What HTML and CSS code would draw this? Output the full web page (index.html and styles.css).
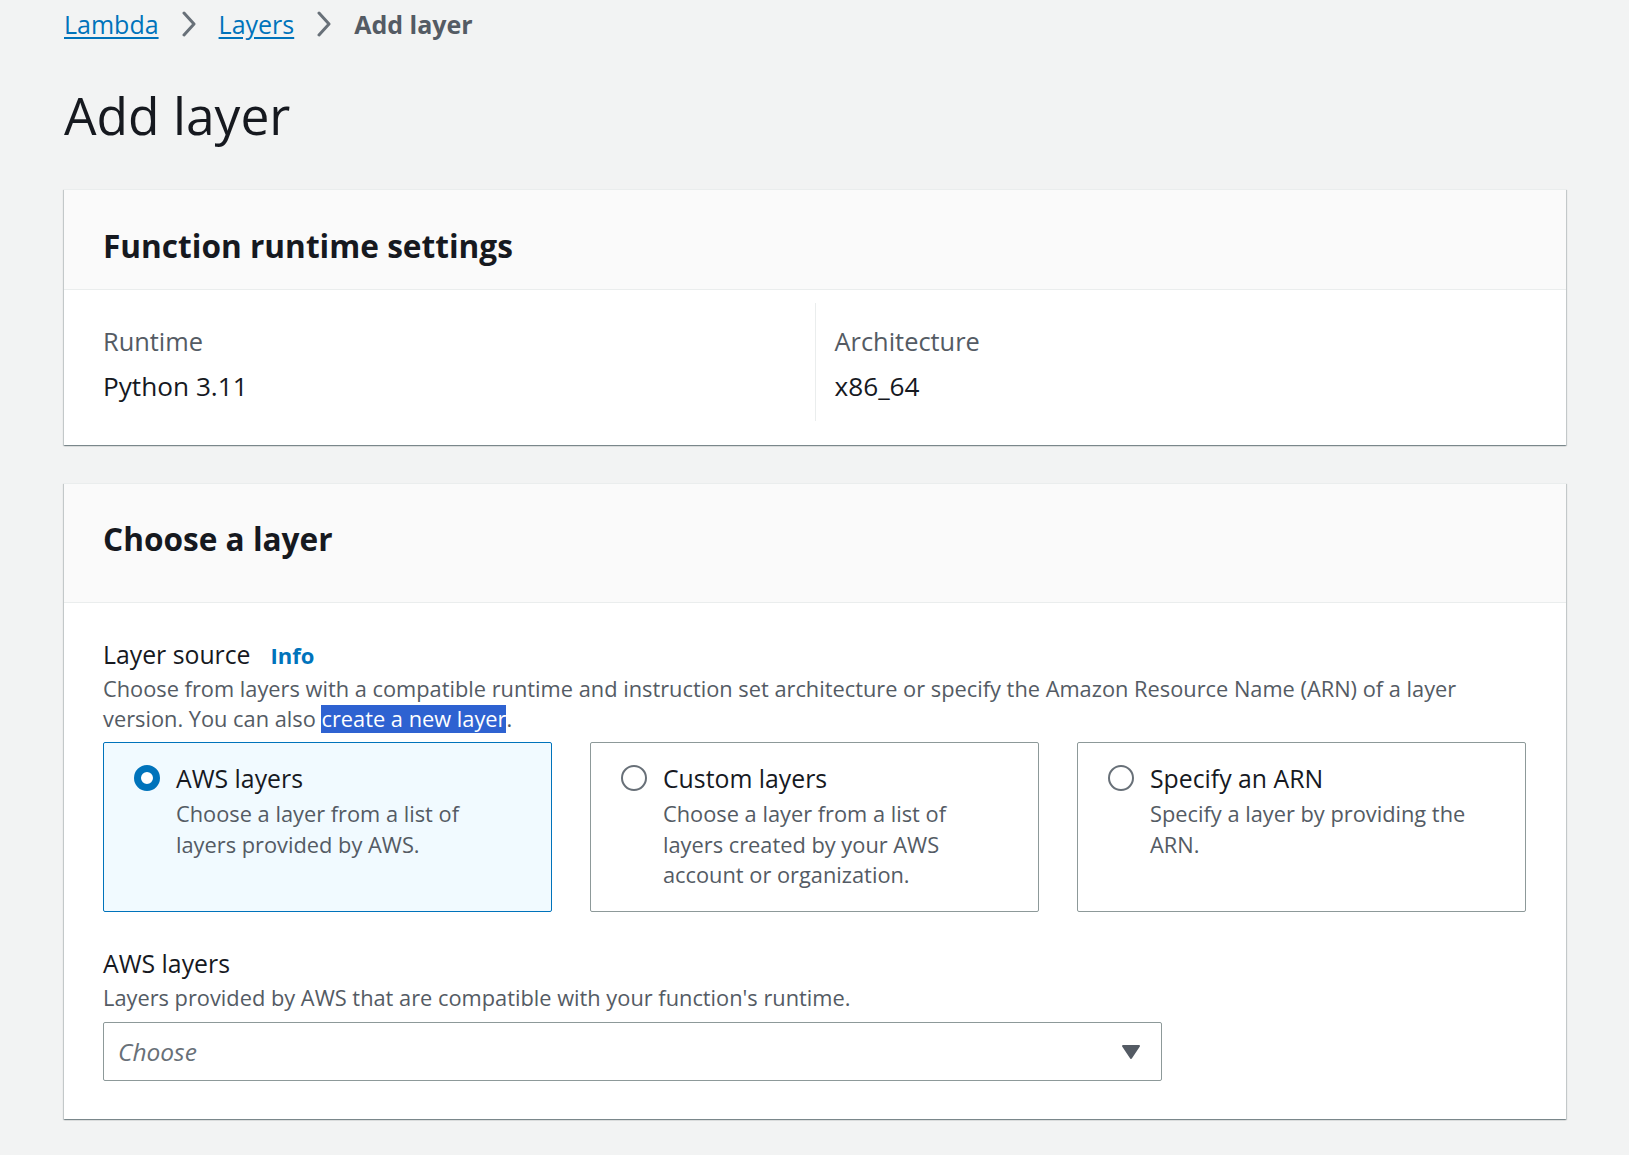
FILE: index.html
```
<!DOCTYPE html>
<html lang="en">
<head>
<meta charset="utf-8">
<title>Add layer</title>
<link rel="stylesheet" href="styles.css">
</head>
<body>
<div class="page">
  <nav class="breadcrumbs">
    <a class="crumb-link" href="#">Lambda</a>
    <svg class="crumb-sep" viewBox="0 0 16 26" width="16" height="26"><path d="M3 2 L13 13 L3 24" fill="none" stroke="#687078" stroke-width="3" stroke-linecap="round" stroke-linejoin="round"/></svg>
    <a class="crumb-link" href="#">Layers</a>
    <svg class="crumb-sep" viewBox="0 0 16 26" width="16" height="26"><path d="M3 2 L13 13 L3 24" fill="none" stroke="#687078" stroke-width="3" stroke-linecap="round" stroke-linejoin="round"/></svg>
    <span class="crumb-current">Add layer</span>
  </nav>

  <h1 class="page-title">Add layer</h1>

  <section class="container">
    <div class="container-header header-1">
      <h2 class="container-title">Function runtime settings</h2>
    </div>
    <div class="container-body kv-body">
      <div class="kv-col">
        <div class="kv-label">Runtime</div>
        <div class="kv-value">Python 3.11</div>
      </div>
      <div class="kv-col kv-col-divided">
        <div class="kv-label">Architecture</div>
        <div class="kv-value">x86_64</div>
      </div>
    </div>
  </section>

  <section class="container container-2">
    <div class="container-header header-2">
      <h2 class="container-title">Choose a layer</h2>
    </div>
    <div class="container-body form-body">
      <div class="field">
        <div class="field-label-row">
          <span class="field-label">Layer source</span>
          <a class="info-link" href="#">Info</a>
        </div>
        <div class="field-desc">Choose from layers with a compatible runtime and instruction set architecture or specify the Amazon Resource Name (ARN) of a layer version. You can also <span class="selected-text">create a new layer</span>.</div>
        <div class="tiles">
          <div class="tile tile-selected">
            <div class="tile-head">
              <span class="radio radio-on"></span>
              <span class="tile-title">AWS layers</span>
            </div>
            <div class="tile-desc">Choose a layer from a list of layers provided by AWS.</div>
          </div>
          <div class="tile">
            <div class="tile-head">
              <span class="radio"></span>
              <span class="tile-title">Custom layers</span>
            </div>
            <div class="tile-desc">Choose a layer from a list of layers created by your AWS account or organization.</div>
          </div>
          <div class="tile">
            <div class="tile-head">
              <span class="radio"></span>
              <span class="tile-title">Specify an ARN</span>
            </div>
            <div class="tile-desc">Specify a layer by providing the ARN.</div>
          </div>
        </div>
      </div>

      <div class="field field-2">
        <div class="field-label-row">
          <span class="field-label">AWS layers</span>
        </div>
        <div class="field-desc desc-2">Layers provided by AWS that are compatible with your function's runtime.</div>
        <div class="select">
          <span class="select-placeholder">Choose</span>
          <svg class="select-caret" viewBox="0 0 20 16" width="20" height="16"><path d="M2 2 L18 2 L10 14 Z" fill="#545b64" stroke="#545b64" stroke-width="2" stroke-linejoin="round"/></svg>
        </div>
      </div>
    </div>
  </section>
</div>
</body>
</html>
```
FILE: styles.css
```
* { box-sizing: border-box; }

body {
  margin: 0;
  background: #f2f3f3;
  font-family: "Open Sans", "Noto Sans", sans-serif;
  color: #16191f;
}

.page {
  padding: 0 63px 40px 64px;
}

/* Breadcrumbs */
.breadcrumbs {
  display: flex;
  align-items: center;
  height: 30px;
  margin-top: 9px;
  font-size: 25px;
  line-height: 30px;
}

.crumb-link {
  color: #0073bb;
  text-decoration: underline;
  text-underline-offset: 3px;
}

.crumb-sep {
  margin: 0 22px 0 22px;
  display: block;
}

.crumb-current {
  color: #545b64;
  font-weight: 700;
}

/* Title */
.page-title {
  margin: 46px 0 44px 0;
  font-size: 51.5px;
  line-height: 60px;
  font-weight: 400;
  color: #16191f;
}

/* Containers */
.container {
  background: #ffffff;
  border-top: 1px solid #eaeded;
  box-shadow: 0 1px 1px 0 rgba(0, 28, 36, 0.3), 1px 1px 1px 0 rgba(0, 28, 36, 0.15), -1px 1px 1px 0 rgba(0, 28, 36, 0.15);
}

.container-2 {
  margin-top: 38px;
}

.container-header {
  background: #fafafa;
  border-bottom: 1px solid #eaeded;
  padding: 0 39px;
}

.header-1 {
  height: 100px;
  padding-top: 36px;
}

.header-2 {
  height: 119px;
  padding-top: 35px;
}

.container-title {
  margin: 0;
  font-size: 31.6px;
  line-height: 40px;
  font-weight: 700;
  color: #16191f;
}

.container-body {
  padding: 0 40px 0 39px;
}

/* Key-value */
.kv-body {
  display: grid;
  grid-template-columns: 1fr 1fr;
  padding-top: 13px;
  padding-bottom: 24px;
}

.kv-col {
  padding: 23px 0 20px 0;
}

.kv-col-divided {
  border-left: 1px solid #eaeded;
  padding-left: 19px;
}

.kv-label {
  font-size: 25.4px;
  line-height: 30px;
  color: #545b64;
}

.kv-value {
  margin-top: 15px;
  font-size: 26.2px;
  line-height: 30px;
  color: #16191f;
}

/* Form */
.form-body {
  padding-top: 35px;
  padding-bottom: 38px;
}

.field-label-row {
  display: flex;
  align-items: baseline;
  gap: 20px;
  line-height: 32px;
}

.field-label {
  font-size: 24.8px;
  color: #16191f;
}

.info-link {
  font-size: 22px;
  font-weight: 700;
  color: #0073bb;
  text-decoration: none;
}

.field-desc {
  margin-top: 3px;
  font-size: 21.8px;
  line-height: 30px;
  color: #545b64;
}

.selected-text {
  display: inline-block;
  line-height: 28px;
  background: #2e62d1;
  color: #ffffff;
}

.tiles {
  margin-top: 8px;
  display: grid;
  grid-template-columns: 1fr 1fr 1fr;
  gap: 38px;
}

.tile {
  height: 170px;
  border: 1px solid #8d9999;
  border-radius: 2px;
  padding: 19px 28px 0 30px;
  background: #ffffff;
}

.tile-selected {
  border-color: #0073bb;
  background: #f1faff;
}

.tile-head {
  display: flex;
  align-items: center;
  gap: 16px;
  height: 32px;
}

.radio {
  flex: none;
  width: 26px;
  height: 26px;
  border-radius: 50%;
  border: 2px solid #687078;
  background: #ffffff;
}

.radio-on {
  border: 7px solid #0073bb;
}

.tile-title {
  font-size: 24.8px;
  line-height: 32px;
  color: #16191f;
}

.tile-desc {
  margin-top: 5px;
  padding-left: 42px;
  font-size: 21.8px;
  line-height: 30.5px;
  color: #545b64;
}

.field-2 {
  margin-top: 35px;
}

.desc-2 {
  margin-top: 4px;
}

.select {
  margin-top: 9px;
  width: 1059px;
  height: 59px;
  border: 1px solid #8d9999;
  border-radius: 2px;
  display: flex;
  align-items: center;
  justify-content: space-between;
  padding: 0 20px 0 14px;
  background: #ffffff;
}

.select-placeholder {
  font-style: italic;
  font-size: 24.5px;
  color: #687078;
}

.select-caret {
  display: block;
}
```
